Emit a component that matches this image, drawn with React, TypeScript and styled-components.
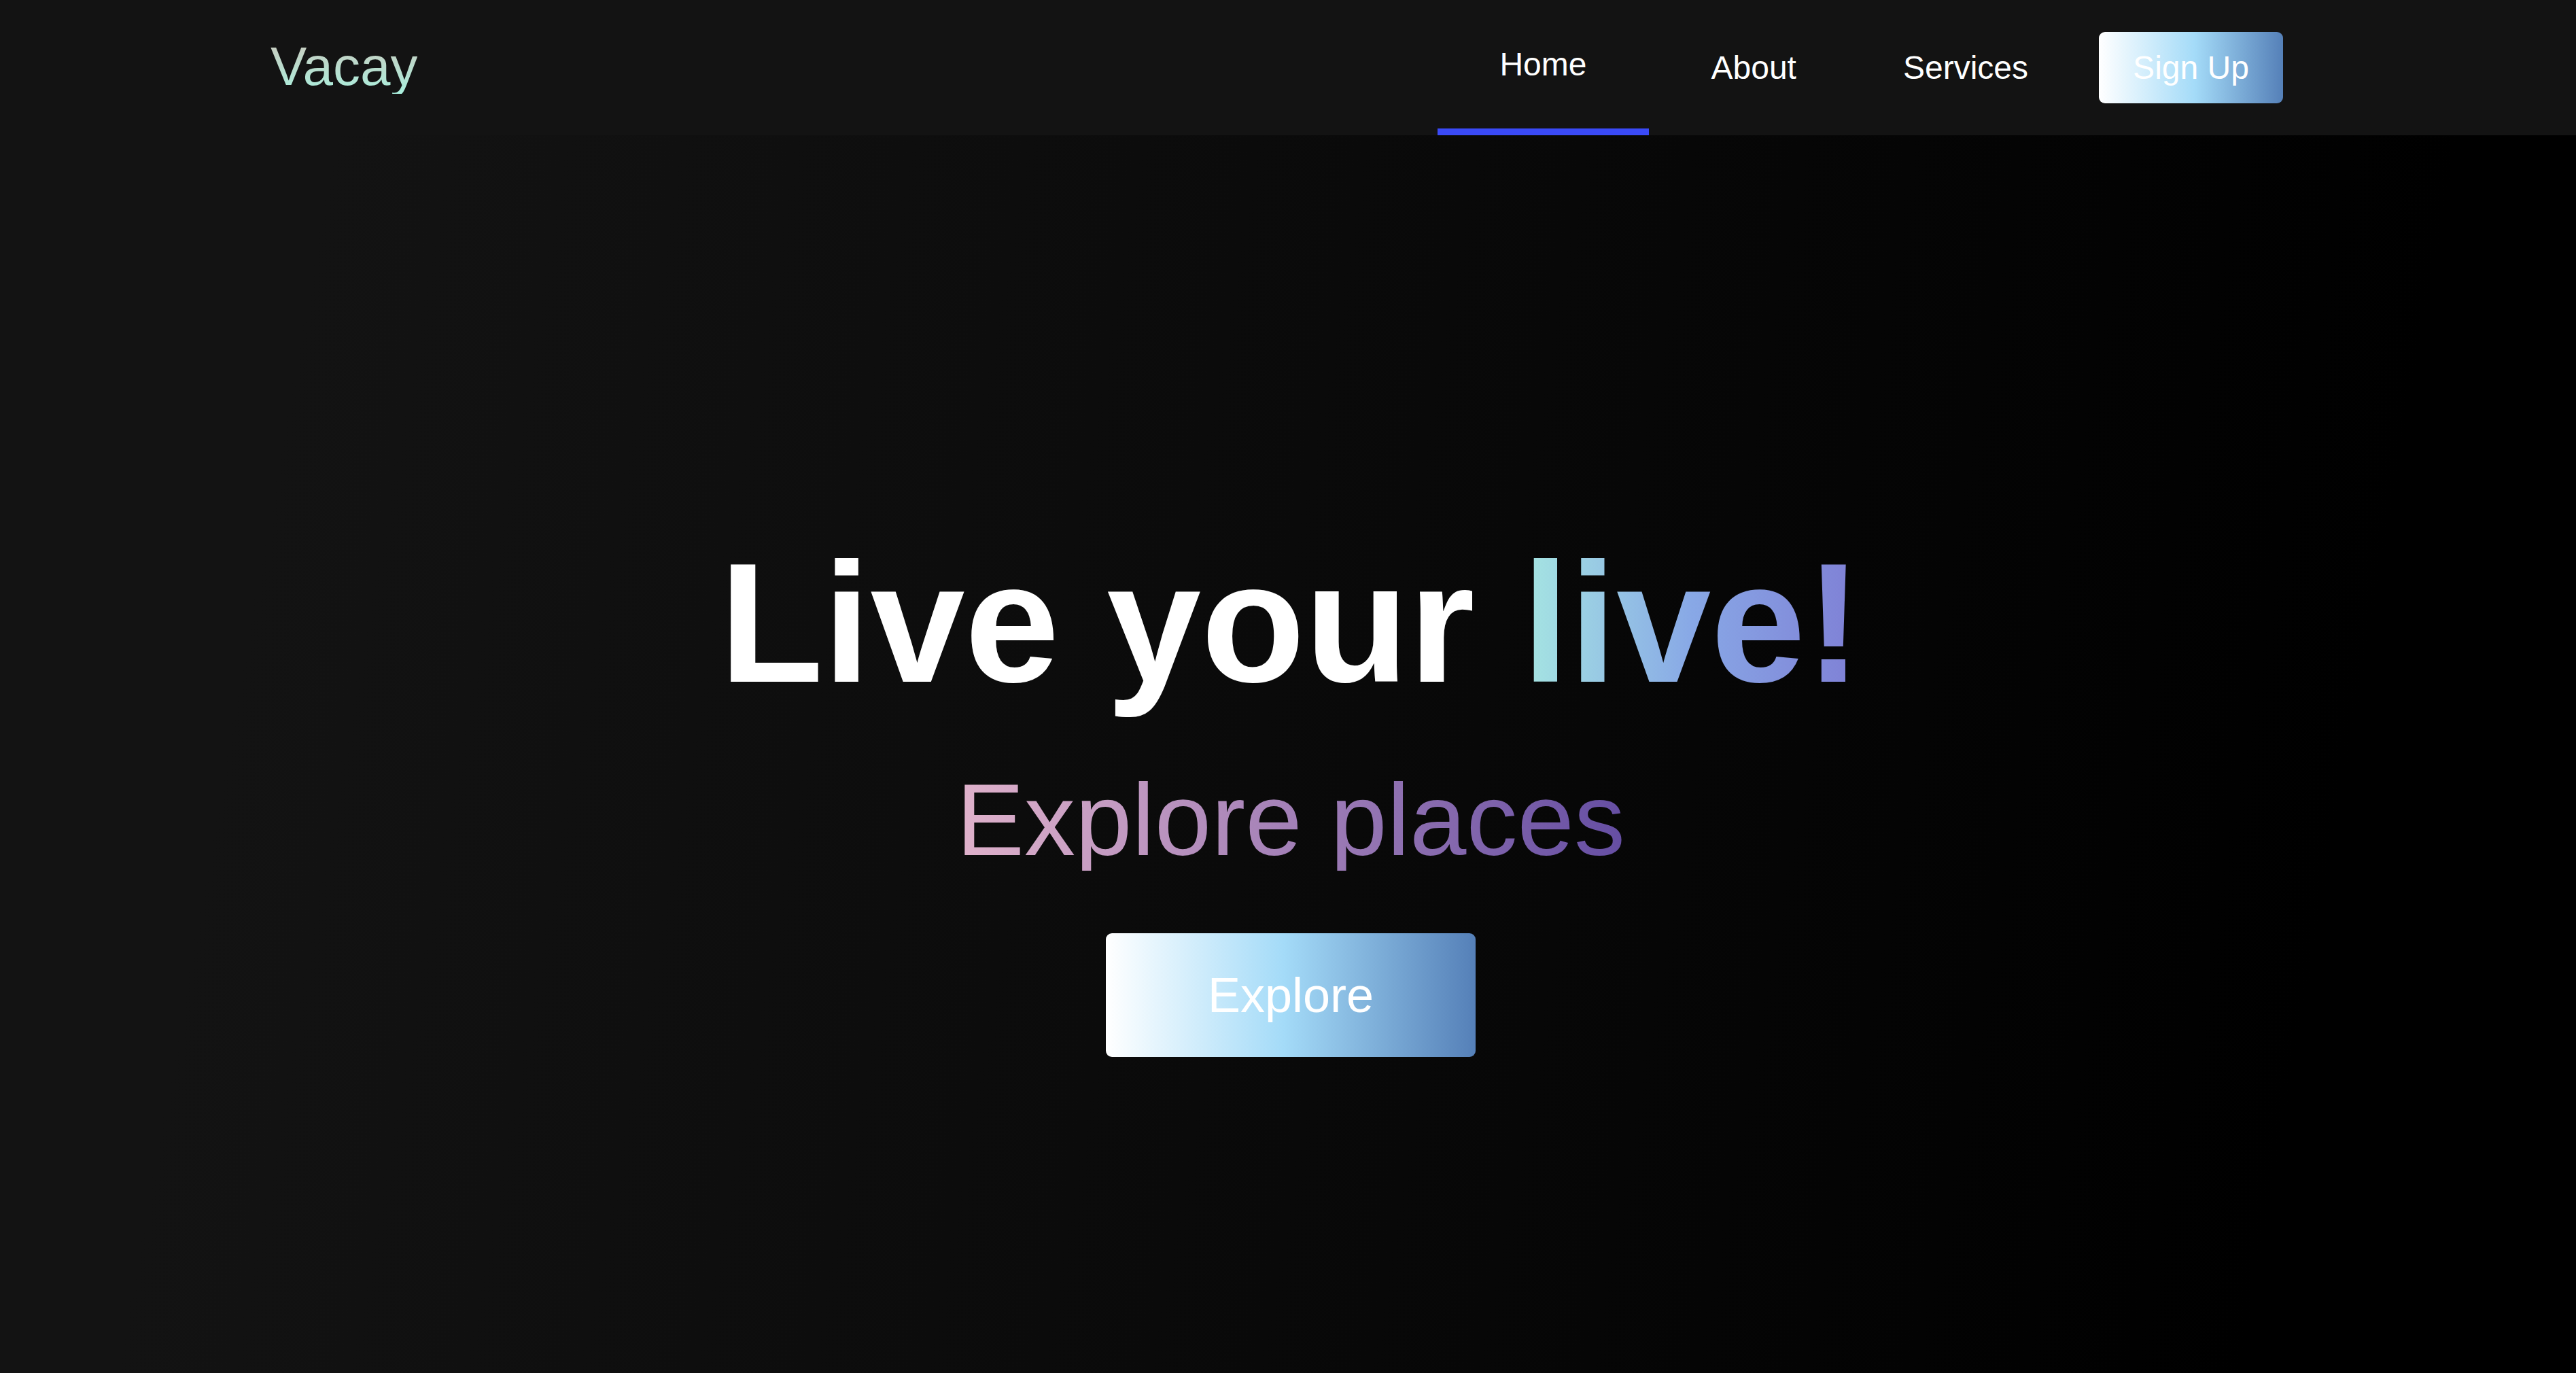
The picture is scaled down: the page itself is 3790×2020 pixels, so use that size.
import React from "react";
import styled, { createGlobalStyle } from "styled-components";

const GlobalStyle = createGlobalStyle`
  html, body {
    margin: 0;
    padding: 0;
    background: #000;
  }
  body {
    font-family: "Liberation Sans", Arial, sans-serif;
  }
  * { box-sizing: border-box; }
`;

const Page = styled.div`
  min-height: 100vh;
  display: flex;
  flex-direction: column;
`;

const NavBar = styled.header`
  height: 199px;
  flex: 0 0 199px;
  background: #131313;
  display: flex;
  align-items: center;
  justify-content: space-between;
  padding: 0 431px 0 398px;
`;

const Logo = styled.a`
  font-size: 80px;
  line-height: 1;
  margin-top: -4px;
  background: linear-gradient(to bottom, #cbc9bd, #a9efdd);
  -webkit-background-clip: text;
  background-clip: text;
  color: transparent;
  text-decoration: none;
  cursor: pointer;
`;

const NavList = styled.nav`
  height: 100%;
  display: flex;
  align-items: center;
  gap: 27px;
`;

const NavLink = styled.a<{ $active?: boolean }>`
  height: 100%;
  display: flex;
  align-items: center;
  padding: 0 ${(p) => (p.$active ? "91px" : "65px")};
  font-size: 48px;
  line-height: 1;
  color: #fff;
  text-decoration: none;
  border-bottom: ${(p) => (p.$active ? "10px solid #3a4af7" : "none")};
  cursor: pointer;
`;

const SignUp = styled.button`
  margin-left: 12px;
  width: 271px;
  height: 105px;
  border: none;
  border-radius: 9px;
  background: linear-gradient(to right, #ffffff 0%, #a4dbf8 52%, #5580b8 100%);
  color: #fff;
  font-family: "Liberation Sans", Arial, sans-serif;
  font-size: 48px;
  line-height: 1;
  padding: 0;
  cursor: pointer;
`;

const Hero = styled.main`
  flex: 1;
  display: flex;
  flex-direction: column;
  align-items: center;
  justify-content: center;
  padding: 128px 0 0 8px;
  background: linear-gradient(100deg, #131313 12%, #0b0b0b 45%, #000 88%);
`;

const Title = styled.h1`
  margin: 0;
  font-size: 250px;
  font-weight: 700;
  line-height: 1;
  color: #fff;
  white-space: nowrap;
`;

const GradientWord = styled.span`
  background: linear-gradient(to right, #a6e6e2, #88a8e6 50%, #7f7fd5);
  -webkit-background-clip: text;
  background-clip: text;
  color: transparent;
`;

const Subtitle = styled.h2`
  margin: 89px 0 0;
  font-size: 150px;
  font-weight: 400;
  line-height: 1;
  background: linear-gradient(to right, #e0b2cb, #654ea3);
  -webkit-background-clip: text;
  background-clip: text;
  color: transparent;
  white-space: nowrap;
`;

const ExploreButton = styled.button`
  margin-top: 92px;
  width: 544px;
  height: 182px;
  border: none;
  border-radius: 9px;
  background: linear-gradient(to right, #ffffff 0%, #a4dbf8 48%, #5580b8 100%);
  color: #fff;
  font-family: "Liberation Sans", Arial, sans-serif;
  font-size: 72px;
  line-height: 1;
  padding: 0;
  cursor: pointer;
`;

export default function App() {
  return (
    <>
      <GlobalStyle />
      <Page>
        <NavBar>
          <Logo>Vacay</Logo>
          <NavList>
            <NavLink $active>Home</NavLink>
            <NavLink>About</NavLink>
            <NavLink>Services</NavLink>
            <SignUp>Sign Up</SignUp>
          </NavList>
        </NavBar>
        <Hero>
          <Title>
            Live your <GradientWord>live!</GradientWord>
          </Title>
          <Subtitle>Explore places</Subtitle>
          <ExploreButton>Explore</ExploreButton>
        </Hero>
      </Page>
    </>
  );
}
